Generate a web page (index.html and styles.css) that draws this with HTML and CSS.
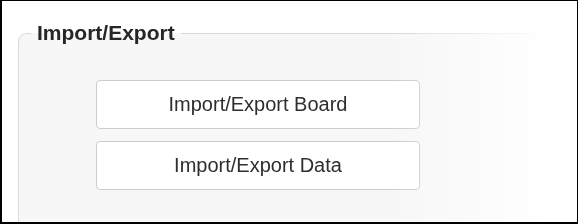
FILE: index.html
```html
<!DOCTYPE html>
<html>
<head>
<meta charset="utf-8">
<link rel="stylesheet" href="styles.css">
</head>
<body>
<div class="frame">
  <div class="panel-wrap">
    <fieldset class="panel">
      <legend class="panel-title">Import/Export</legend>
      <div class="actions">
        <button class="btn" type="button">Import/Export Board</button>
        <button class="btn" type="button">Import/Export Data</button>
      </div>
    </fieldset>
  </div>
</div>
</body>
</html>
```
FILE: styles.css
```css
html, body {
  margin: 0;
  padding: 0;
  background: #fff;
}
.frame {
  box-sizing: border-box;
  width: 578px;
  height: 224px;
  border: 2px solid #000;
  border-top-width: 1px;
  border-right-width: 1px;
  overflow: hidden;
  font-family: "Liberation Sans", Arial, sans-serif;
  color: #333;
}
.panel-wrap {
  padding: 20px 0 0 16px;
  -webkit-mask-image: linear-gradient(to right, #000 0, #000 390px, transparent 550px);
  mask-image: linear-gradient(to right, #000 0, #000 390px, transparent 550px);
}
.panel {
  margin: 0;
  padding: 35px 0 60px 0;
  border: 1px solid #d9d9d9;
  border-right: none;
  border-top-left-radius: 9px;
  background: #f7f7f7;
}
.panel-title {
  margin-left: 12px;
  padding: 0 6px;
  font-size: 21px;
  font-weight: bold;
  color: #262626;
}
.actions {
  display: flex;
  flex-direction: column;
  gap: 12px;
  width: 324px;
  margin-left: 77px;
}
.btn {
  box-sizing: border-box;
  height: 49px;
  border: 1px solid #cccccc;
  border-radius: 4px;
  background: #fff;
  font-family: "Liberation Sans", Arial, sans-serif;
  font-size: 20px;
  color: #2e2e2e;
  padding: 0;
}
```
